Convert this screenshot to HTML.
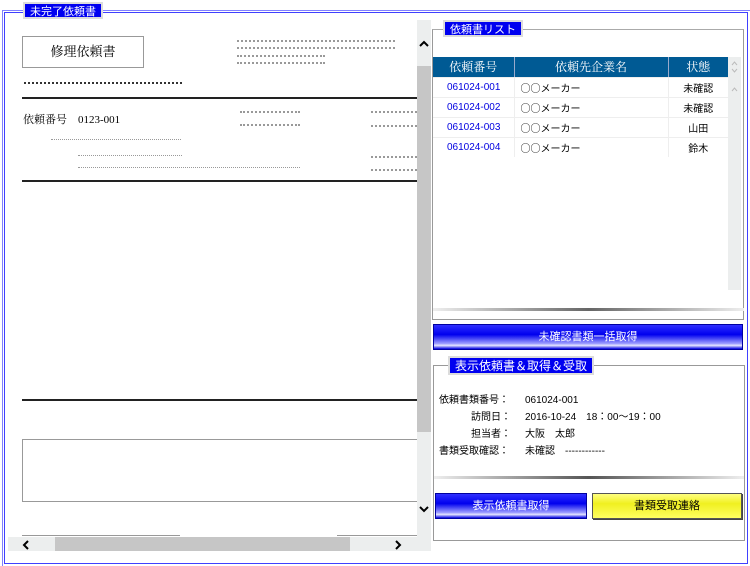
<!DOCTYPE html>
<html><head><meta charset="utf-8"><style>
*{margin:0;padding:0;box-sizing:border-box}
body{width:750px;height:566px;background:#fff;position:relative;overflow:hidden;font-family:"Liberation Serif","Noto Serif CJK SC","Noto Sans CJK JP",serif;font-size:11px;color:#000}
.a{position:absolute}
.lg{position:absolute;background:#0000f0;color:#fff;border:2px solid #dcdcdc;font-size:11px;height:17px;padding:0 5px;font-family:"Liberation Sans","Noto Sans CJK JP",sans-serif;white-space:nowrap;display:flex;align-items:center}
.dot{position:absolute;border-top:2px dotted #999;height:0}
.dotd{position:absolute;border-top:2px dotted #333;height:0}
.hr{position:absolute;height:2px;background:#222}
.btnb{position:absolute;background:linear-gradient(#3030ff 0%,#0000ee 40%,#a0a0ff 78%,#e8e8ff 85%,#0000e0 100%);border:1px solid #0000a0;color:#fff;text-align:center;font-family:"Liberation Sans","Noto Sans CJK JP",sans-serif;font-size:11px}
.btny{position:absolute;background:linear-gradient(#ffff80,#f0f020 40%,#ffff60);border:1px solid #555;box-shadow:1px 1px 0 #444;text-align:center;font-size:11px;font-family:"Liberation Sans","Noto Sans CJK JP",sans-serif}
td{height:20px;border-bottom:1px solid #eee;font-size:10px;font-family:"Liberation Sans","Noto Sans CJK JP",sans-serif}
.o{font-family:"Noto Sans CJK JP",sans-serif}
</style></head><body>
<div class="a" style="left:2px;top:10px;width:748px;height:556px;border:1px solid #8080ff;border-right:none;border-bottom:none"></div>
<div class="a" style="left:4px;top:12px;width:744px;height:552px;border:1px solid #4040ff"></div>
<div class="lg" style="left:23px;top:2px;">未完了依頼書</div>

<div class="a" style="left:22px;top:36px;width:122px;height:32px;border:1px solid #999;text-align:center;line-height:30px;font-size:13px">修理依頼書</div>
<div class="dot" style="left:237px;top:40px;width:158px"></div>
<div class="dot" style="left:237px;top:47px;width:158px"></div>
<div class="dot" style="left:237px;top:55px;width:88px"></div>
<div class="dot" style="left:237px;top:62px;width:88px"></div>
<div class="dotd" style="left:24px;top:82px;width:158px"></div>
<div class="hr" style="left:22px;top:97px;width:396px"></div>
<div class="a" style="left:23px;top:111px;font-size:11px">依頼番号　0123-001</div>
<div class="dot" style="left:240px;top:111px;width:60px"></div>
<div class="dot" style="left:240px;top:124px;width:60px"></div>
<div class="dot" style="left:371px;top:111px;width:46px"></div>
<div class="dot" style="left:371px;top:125px;width:46px"></div>
<div class="dot" style="left:51px;top:139px;width:130px;border-top-width:1px"></div>
<div class="dot" style="left:78px;top:155px;width:104px;border-top-width:1px"></div>
<div class="dot" style="left:78px;top:167px;width:222px;border-top-width:1px"></div>
<div class="dot" style="left:371px;top:156px;width:46px"></div>
<div class="dot" style="left:371px;top:169px;width:46px"></div>
<div class="hr" style="left:22px;top:180px;width:396px"></div>
<div class="hr" style="left:22px;top:399px;width:396px"></div>
<div class="a" style="left:22px;top:439px;width:396px;height:63px;border:1px solid #999;border-right:none"></div>
<div class="a" style="left:22px;top:535px;width:158px;height:1px;background:#999"></div>
<div class="a" style="left:337px;top:535px;width:81px;height:1px;background:#999"></div>
<div class="a" style="left:417px;top:20px;width:14px;height:531px;background:#eceeee"></div>
<div class="a" style="left:417px;top:66px;width:14px;height:366px;background:#c6c6c6"></div>
<svg class="a" style="left:418px;top:39px" width="12" height="10"><path d="M2 7 L6 3 L10 7" stroke="#000" stroke-width="2" fill="none"/></svg>
<svg class="a" style="left:418px;top:504px" width="12" height="10"><path d="M2 3 L6 7 L10 3" stroke="#000" stroke-width="2" fill="none"/></svg>
<div class="a" style="left:8px;top:537px;width:409px;height:14px;background:#eceeee"></div>
<div class="a" style="left:55px;top:537px;width:295px;height:14px;background:#c6c6c6"></div>
<svg class="a" style="left:21px;top:539px" width="10" height="12"><path d="M7 2 L3 6 L7 10" stroke="#000" stroke-width="2" fill="none"/></svg>
<svg class="a" style="left:393px;top:539px" width="10" height="12"><path d="M3 2 L7 6 L3 10" stroke="#000" stroke-width="2" fill="none"/></svg>

<div class="a" style="left:432px;top:29px;width:312px;height:291px;border:1px solid #999;border-top-color:#aaa"></div>
<div class="lg" style="left:443px;top:20px;">依頼書リスト</div>
<table class="a" style="left:433px;top:57px;width:295px;border-collapse:collapse">
<tr style="background:#005a94;color:#fff"><td style="width:81px;text-align:center;font-size:12px;height:19px;border-right:1px solid #9ac;font-family:'Liberation Serif','Noto Serif CJK SC',serif">依頼番号</td><td style="width:154px;text-align:center;font-size:12px;border-right:1px solid #9ac;font-family:'Liberation Serif','Noto Serif CJK SC',serif">依頼先企業名</td><td style="text-align:center;font-size:12px;font-family:'Liberation Serif','Noto Serif CJK SC',serif">状態</td></tr>
<tr><td style="color:#0000e0;padding-left:14px">061024-001</td><td style="padding-left:6px;border-left:1px solid #eee;border-right:1px solid #eee"><span class="o">○○</span>メーカー</td><td style="text-align:center">未確認</td></tr>
<tr><td style="color:#0000e0;padding-left:14px">061024-002</td><td style="padding-left:6px;border-left:1px solid #eee;border-right:1px solid #eee"><span class="o">○○</span>メーカー</td><td style="text-align:center">未確認</td></tr>
<tr><td style="color:#0000e0;padding-left:14px">061024-003</td><td style="padding-left:6px;border-left:1px solid #eee;border-right:1px solid #eee"><span class="o">○○</span>メーカー</td><td style="text-align:center">山田</td></tr>
<tr><td style="color:#0000e0;padding-left:14px;border:none">061024-004</td><td style="padding-left:6px;border:none;border-left:1px solid #eee;border-right:1px solid #eee"><span class="o">○○</span>メーカー</td><td style="text-align:center;border:none">鈴木</td></tr>
</table>
<div class="a" style="left:728px;top:57px;width:13px;height:233px;background:#eceeee"></div>
<svg class="a" style="left:729px;top:58px" width="11" height="40"><path d="M3 7 L5.5 4 L8 7 M3 11 L5.5 14 L8 11 M3 33 L5.5 30 L8 33" stroke="#bbb" stroke-width="1" fill="none"/></svg>
<div class="a" style="left:433px;top:308px;width:311px;height:3px;background:linear-gradient(90deg,#eee,#666 50%,#eee)"></div>
<div class="btnb" style="left:433px;top:324px;width:310px;height:26px;line-height:24px">未確認書類一括取得</div>

<div class="a" style="left:433px;top:365px;width:312px;height:176px;border:1px solid #999"></div>
<div class="lg" style="left:448px;top:356px;font-size:12px;height:19px">表示依頼書＆取得＆受取</div>
<div class="a" style="left:439px;top:392px;width:300px;font-size:10px;line-height:17px;font-family:'Liberation Sans','Noto Sans CJK JP',sans-serif">
<div><span style="display:inline-block;width:86px">依頼書類番号：</span>061024-001</div>
<div><span style="display:inline-block;width:72px;text-align:right;margin-right:14px">訪問日：</span>2016-10-24　18：00～19：00</div>
<div><span style="display:inline-block;width:72px;text-align:right;margin-right:14px">担当者：</span>大阪　太郎</div>
<div><span style="display:inline-block;width:86px">書類受取確認：</span>未確認　------------</div>
</div>
<div class="a" style="left:434px;top:476px;width:310px;height:3px;background:linear-gradient(90deg,#eee,#555 50%,#eee)"></div>
<div class="btnb" style="left:435px;top:493px;width:152px;height:26px;line-height:24px">表示依頼書取得</div>
<div class="btny" style="left:592px;top:493px;width:150px;height:26px;line-height:24px">書類受取連絡</div>
</body></html>
